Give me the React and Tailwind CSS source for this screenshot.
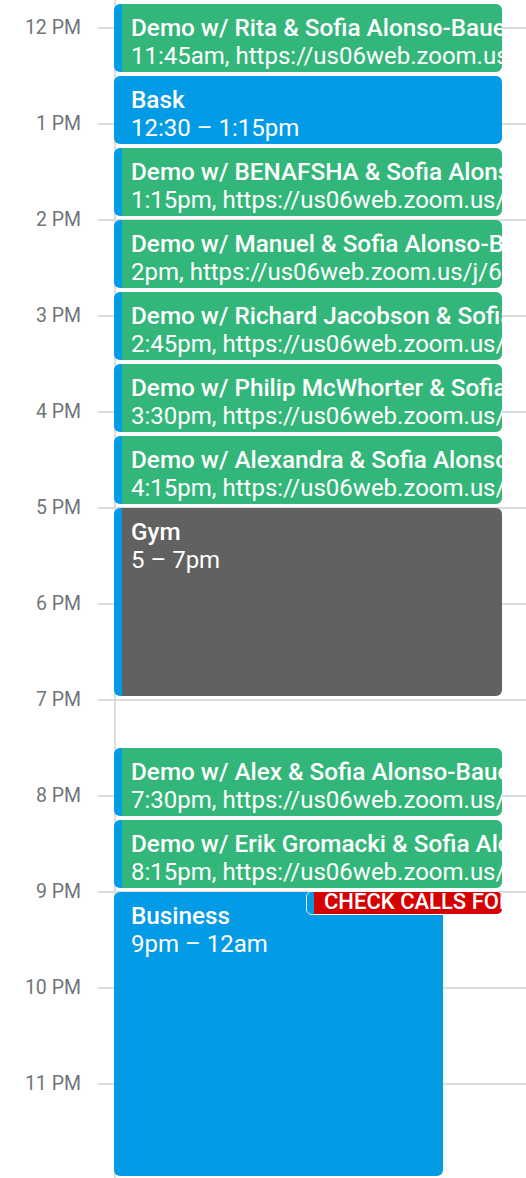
import React from 'react';

const HOURS = ['12 PM', '1 PM', '2 PM', '3 PM', '4 PM', '5 PM', '6 PM', '7 PM', '8 PM', '9 PM', '10 PM', '11 PM'];

// start / end in hours (24h)
const EVENTS = [
  { title: 'Demo w/ Rita & Sofia Alonso-Bauer', sub: '11:45am, https://us06web.zoom.us/j/61234567890', start: 11.75, end: 12.5, color: 'bg-[#33b679]' },
  { title: 'Bask', sub: '12:30 – 1:15pm', start: 12.5, end: 13.25, color: 'bg-[#039be5]' },
  { title: 'Demo w/ BENAFSHA & Sofia Alonso-Bauer', sub: '1:15pm, https://us06web.zoom.us/j/61234567890', start: 13.25, end: 14, color: 'bg-[#33b679]' },
  { title: 'Demo w/ Manuel & Sofia Alonso-Bauer', sub: '2pm, https://us06web.zoom.us/j/61234567890', start: 14, end: 14.75, color: 'bg-[#33b679]' },
  { title: 'Demo w/ Richard Jacobson & Sofia Alonso-Bauer', sub: '2:45pm, https://us06web.zoom.us/j/61234567890', start: 14.75, end: 15.5, color: 'bg-[#33b679]' },
  { title: 'Demo w/ Philip McWhorter & Sofia Alonso-Bauer', sub: '3:30pm, https://us06web.zoom.us/j/61234567890', start: 15.5, end: 16.25, color: 'bg-[#33b679]' },
  { title: 'Demo w/ Alexandra & Sofia Alonso-Bauer', sub: '4:15pm, https://us06web.zoom.us/j/61234567890', start: 16.25, end: 17, color: 'bg-[#33b679]' },
  { title: 'Gym', sub: '5 – 7pm', start: 17, end: 19, color: 'bg-[#616161]' },
  { title: 'Demo w/ Alex & Sofia Alonso-Bauer', sub: '7:30pm, https://us06web.zoom.us/j/61234567890', start: 19.5, end: 20.25, color: 'bg-[#33b679]' },
  { title: 'Demo w/ Erik Gromacki & Sofia Alonso-Bauer', sub: '8:15pm, https://us06web.zoom.us/j/61234567890', start: 20.25, end: 21, color: 'bg-[#33b679]' },
  { title: 'Business', sub: '9pm – 12am', start: 21, end: 24, color: 'bg-[#039be5]', narrow: true },
];

const HOUR_PX = 96;
const TOP_OFFSET = 28; // y of the 12 PM line

const yOf = (h) => TOP_OFFSET + (h - 12) * HOUR_PX;

const EventCard = ({ ev }) => {
  const top = yOf(ev.start);
  const height = yOf(ev.end) - top - 4;
  return (
    <div
      className={`absolute left-0 flex overflow-hidden rounded-[6px] ${ev.narrow ? 'w-[329px]' : 'w-[388px]'}`}
      style={{ top, height }}
    >
      <div className="w-[8px] shrink-0 bg-[#039be5]" />
      <div className={`flex-1 min-w-0 pl-[9px] pt-[9px] text-white ${ev.color}`}>
        <div className="whitespace-nowrap text-[24.3px] leading-[29px] font-medium">{ev.title}</div>
        <div className="whitespace-nowrap text-[24px] leading-[29px]">{ev.sub}</div>
      </div>
    </div>
  );
};

const App = () => {
  return (
    <div
      className="relative h-[1178px] w-[526px] overflow-hidden bg-white"
      style={{ fontFamily: 'Roboto, "Noto Sans", sans-serif' }}
    >
      {/* hour grid */}
      <div className="flex flex-col">
        <div className="flex h-[28px]">
          <div className="w-[114px] shrink-0" />
          <div className="flex-1 border-l-2 border-[#dadce0]" />
        </div>
        {HOURS.map((label) => (
          <div key={label} className="flex h-[96px]">
            <div className="w-[98px] shrink-0 pr-[17px] text-right">
              <span className="-mt-[13px] block whitespace-nowrap text-[19.5px] leading-[26px] text-[#70757a]">{label}</span>
            </div>
            <div className="-mt-[1px] flex flex-1 flex-col">
              <div className="h-[2px] bg-[#dadce0]" />
              <div className="ml-[16px] flex-1 border-l-2 border-[#dadce0]" />
            </div>
          </div>
        ))}
      </div>

      {/* events */}
      <div className="absolute inset-y-0 left-[114px] right-0">
        {EVENTS.map((ev) => (
          <EventCard key={ev.title} ev={ev} />
        ))}
        <div className="absolute left-[192px] top-[891px] flex h-[24px] w-[197px] overflow-hidden rounded-[6px] border-[1.5px] border-white">
          <div className="w-[7px] shrink-0 bg-[#039be5]" />
          <div className="flex-1 min-w-0 bg-[#d50000] pl-[10px] text-white">
            <div className="whitespace-nowrap text-[22px] leading-[19px] font-medium">CHECK CALLS FOR TOMORROW</div>
          </div>
        </div>
      </div>
    </div>
  );
};

export default App;
